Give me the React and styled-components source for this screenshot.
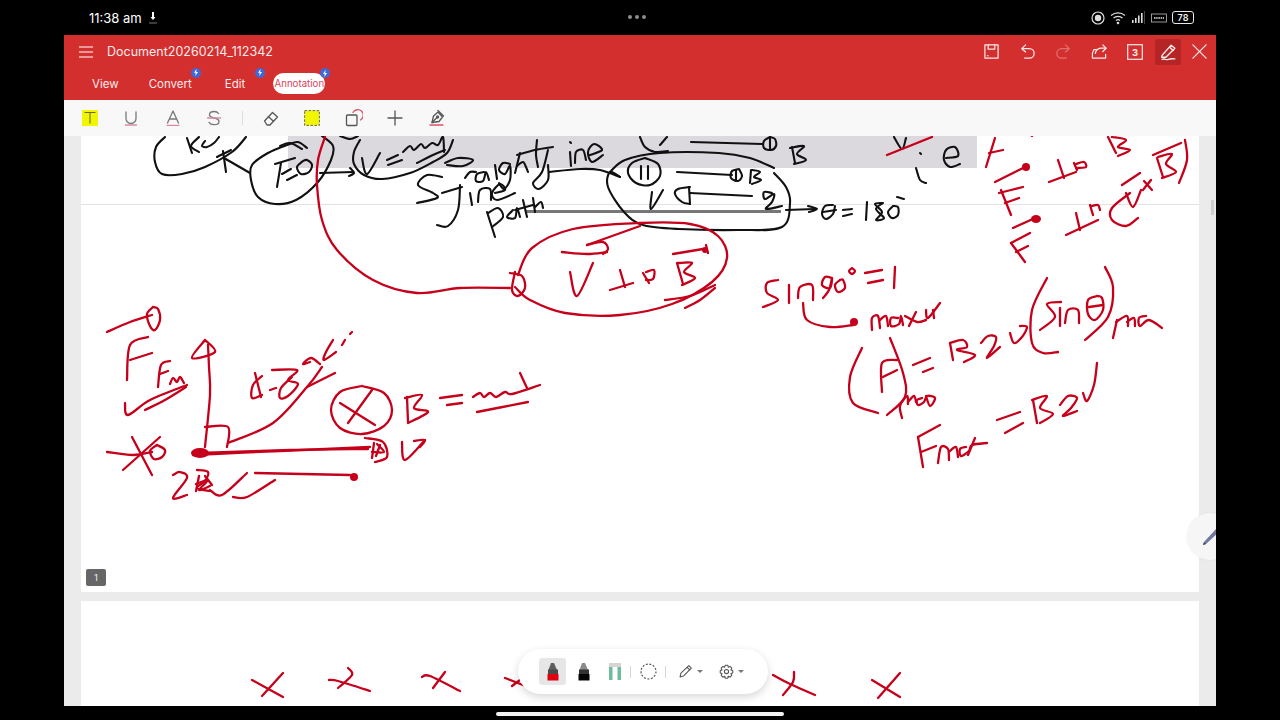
import React from "react";
import styled, { createGlobalStyle } from "styled-components";

const GlobalStyle = createGlobalStyle`
  html, body {
    margin: 0;
    padding: 0;
    background: #000;
    overflow: hidden;
  }
  * { box-sizing: border-box; }
`;

const Screen = styled.div`
  width: 1280px;
  height: 720px;
  background: #000;
  display: flex;
  flex-direction: column;
  align-items: center;
  font-family: Inter, "Liberation Sans", sans-serif;
`;

const Tablet = styled.div`
  width: 1152px;
  height: 706px;
  display: flex;
  flex-direction: column;
`;

const StatusBar = styled.div`
  height: 35px;
  display: flex;
  align-items: center;
  justify-content: space-between;
  padding: 0 22px 0 25px;
  color: #fff;
  position: relative;
`;

const StatusLeft = styled.div`
  display: flex;
  align-items: center;
  gap: 6px;
  font-size: 13px;
  font-weight: 400;
`;

const Dots = styled.div`
  display: flex;
  gap: 3px;
  position: absolute;
  left: 564px;
  top: 15px;
`;

const Dot = styled.span`
  width: 4px;
  height: 4px;
  border-radius: 50%;
  background: #8d8d8d;
`;

const StatusRight = styled.div`
  display: flex;
  align-items: center;
  gap: 5px;
`;

const Battery = styled.div`
  width: 22px;
  height: 13px;
  border: 1px solid #e8e8e8;
  border-radius: 3px;
  font-size: 9px;
  font-weight: 600;
  color: #eee;
  display: flex;
  align-items: center;
  justify-content: center;
`;

const Header = styled.header`
  height: 65px;
  background: #d32f2f;
  color: #fbeaea;
  display: flex;
  flex-direction: column;
`;

const TitleRow = styled.div`
  height: 33px;
  display: flex;
  align-items: center;
  padding: 0 4px 0 15px;
`;

const Title = styled.div`
  font-size: 12.5px;
  margin-left: 14px;
  flex: 1;
`;

const HeaderIcon = styled.div`
  width: 26px;
  height: 26px;
  margin-right: ${(p) => p.$mr ?? 10}px;
  display: flex;
  align-items: center;
  justify-content: center;
  border-radius: 2px;
  background: ${(p) => (p.$active ? "#b52525" : "transparent")};
  opacity: ${(p) => (p.$dim ? 0.35 : 1)};
`;

const TabRow = styled.div`
  height: 32px;
  display: flex;
  align-items: center;
  padding: 0 0 1px 28px;
`;

const Tab = styled.div`
  position: relative;
  font-size: 11.5px;
  margin-right: ${(p) => p.$mr}px;
`;

const ActiveTab = styled.div`
  position: relative;
  width: 52px;
  height: 21px;
  border-radius: 11px;
  background: #fff;
  color: #d9455a;
  font-size: 9.7px;
  display: flex;
  align-items: center;
  justify-content: center;
  white-space: nowrap;
`;

const Spark = styled.span`
  position: absolute;
  top: ${(p) => p.$top}px;
  right: ${(p) => p.$right}px;
  width: 10px;
  height: 10px;
  border-radius: 50%;
  background: #3f67d6;
  display: flex;
  align-items: center;
  justify-content: center;
`;

const Toolbar = styled.div`
  height: 36px;
  background: #f8f8f8;
  display: flex;
  align-items: center;
  padding-left: 5px;
`;

const ToolSlot = styled.div`
  width: 41.5px;
  height: 36px;
  display: flex;
  align-items: center;
  justify-content: center;
`;

const ToolDivider = styled.div`
  width: 1px;
  height: 14px;
  background: #dedede;
  margin: 0 7px;
`;

const Doc = styled.main`
  flex: 1;
  position: relative;
  overflow: hidden;
  background: #ebebeb;
  padding: 0 17px;
  display: flex;
  flex-direction: column;
`;

const PrevPage = styled.section`
  height: 69px;
  background: #fff;
  border-bottom: 1px solid #e2e2e2;
`;

const Highlight = styled.div`
  height: 32px;
  width: 689px;
  margin-left: 207px;
  background: #dbd9dd;
`;

const Page = styled.section`
  height: 387px;
  background: #fff;
  display: flex;
  flex-direction: column;
`;

const GreyRule = styled.div`
  height: 3px;
  width: 255px;
  margin: 5px 0 0 445px;
  background: #777;
`;

const PageBadge = styled.div`
  width: 20px;
  height: 17px;
  margin: auto 0 6px 5px;
  border-radius: 2px;
  background: #666;
  color: #eee;
  font-size: 9.5px;
  display: flex;
  align-items: center;
  justify-content: center;
`;

const NextPage = styled.section`
  flex: 1;
  margin-top: 9px;
  background: #fff;
`;

const InkLayer = styled.svg`
  position: absolute;
  inset: 0;
  width: 1152px;
  height: 570px;
  pointer-events: none;
  fill: none;
  stroke-linecap: round;
  stroke-linejoin: round;
  filter: blur(0.25px);
`;

const ScrollThumb = styled.div`
  position: absolute;
  right: 2px;
  top: 64px;
  width: 3px;
  height: 15px;
  background: #cfcfcf;
`;

const PencilFab = styled.div`
  position: absolute;
  left: 1123px;
  top: 377px;
  width: 47px;
  height: 47px;
  border-radius: 50%;
  background: #f6f6f7;
  box-shadow: 0 0 3px rgba(0, 0, 0, 0.06);
  display: flex;
  align-items: center;
  padding-left: 15px;
`;

const PenBar = styled.div`
  position: absolute;
  left: 454px;
  top: 513px;
  width: 250px;
  height: 45px;
  border-radius: 23px;
  background: #fff;
  box-shadow: 0 3px 8px rgba(0, 0, 0, 0.16);
  display: flex;
  align-items: center;
  padding-left: 19px;
`;

const PenSlot = styled.div`
  width: ${(p) => p.$w ?? 31}px;
  height: 27px;
  display: flex;
  align-items: center;
  justify-content: center;
`;

const SelectedPen = styled.div`
  width: 27px;
  height: 27px;
  border-radius: 3px;
  background: #e6e6e6;
  display: flex;
  align-items: center;
  justify-content: center;
`;

const PenDivider = styled.div`
  width: 1px;
  height: 12px;
  background: #d8d8d8;
`;

const Caret = styled.span`
  width: 0;
  height: 0;
  margin-left: 4px;
  border-left: 3px solid transparent;
  border-right: 3px solid transparent;
  border-top: 3px solid #777;
`;

const HomeZone = styled.div`
  height: 14px;
  display: flex;
  align-items: center;
  justify-content: center;
`;

const HomeIndicator = styled.div`
  width: 288px;
  height: 4px;
  margin-top: 1px;
  border-radius: 2px;
  background: #f2f2f2;
`;

// catmull-rom through the points so the ink looks hand drawn
const smooth = (p) => {
  let d = `M${p[0]} ${p[1]}`;
  const n = p.length / 2;
  const at = (i) => {
    const k = Math.max(0, Math.min(n - 1, i));
    return [p[k * 2], p[k * 2 + 1]];
  };
  for (let i = 0; i < n - 1; i++) {
    const [x0, y0] = at(i - 1);
    const [x1, y1] = at(i);
    const [x2, y2] = at(i + 1);
    const [x3, y3] = at(i + 2);
    const c1x = (x1 + (x2 - x0) / 6).toFixed(1);
    const c1y = (y1 + (y2 - y0) / 6).toFixed(1);
    const c2x = (x2 - (x3 - x1) / 6).toFixed(1);
    const c2y = (y2 - (y3 - y1) / 6).toFixed(1);
    d += `C${c1x} ${c1y} ${c2x} ${c2y} ${x2} ${y2}`;
  }
  return d;
};

const blackInk = [
  // Ke bubble on the left
  [165,137, 156,147, 155,162, 162,174, 182,174, 205,167, 232,152, 246,137],
  [187,138, 192,153], [199,137, 191,146, 199,152],
  [205,141, 202,146, 207,147, 214,143, 219,137],
  [224,158, 250,173], [217,157, 231,150], [223,151, 226,172],
  // F=0
  [307,148, 298,142, 287,145, 268,153, 252,165, 251,180, 258,197, 275,204, 296,200, 318,182, 331,160, 333,146, 322,136],
  [277,187, 281,163], [275,164, 295,158], [282,174, 291,169], [287,180, 297,175],
  [303,161, 297,167, 301,174, 309,172, 312,165, 307,160, 303,161],
  [280,146, 290,143, 302,149],
  // v = const
  [360,140, 354,152, 354,164, 364,175, 382,179, 410,173, 433,162, 447,153, 453,140],
  [320,173, 353,172], [350,168, 354,173, 349,176],
  [362,158, 367,174, 380,153], [387,160, 398,155], [388,165, 402,160],
  [403,152, 410,146, 414,150, 421,144, 425,148, 432,143, 438,145, 443,137, 444,152],
  [340,136, 350,139, 358,136],
  [417,163, 433,155, 445,150], [445,163, 458,158, 473,160, 463,166, 447,165],
  // Straight line path
  [442,177, 427,175, 418,185, 433,193, 437,198, 417,203],
  [437,225, 448,226, 458,210, 460,185], [442,193, 462,187],
  [465,178, 470,172, 476,172],
  [484,172, 477,174, 476,181, 483,181, 486,172, 489,180],
  [495,165, 497,179],
  [510,164, 503,163, 499,170, 505,174, 510,166, 510,180, 504,189, 499,183],
  [520,153, 515,173], [517,166, 523,162, 526,167, 528,172],
  [537,140, 536,155, 538,167], [517,155, 535,150, 553,147],
  [548,150, 542,172, 533,183, 539,189, 548,180, 548,165],
  [570,152, 571,166], [570,142, 571,143],
  [575,163, 576,152, 583,150, 586,160],
  [590,155, 602,150, 594,144, 588,152, 592,162, 603,155],
  [470,193, 472,205],
  [478,202, 480,190, 490,189, 491,200],
  [495,193, 505,190, 500,184, 492,193, 497,200, 515,193],
  [495,237, 487,212], [488,213, 498,208, 503,217, 492,227],
  [513,210, 507,217, 515,218, 517,208, 520,217],
  [523,200, 527,217], [515,210, 533,205],
  [533,198, 535,212], [535,207, 541,202, 543,208],
  // big oval 11 and velocity
  [549,172, 580,169, 600,170, 620,177],
  [620,177, 610,172, 608,187, 624,212, 643,225, 679,229, 738,230, 782,227, 790,203, 786,187, 774,173],
  [610,172, 625,160, 660,153, 719,153, 750,158, 774,168],
  [645,158, 632,163, 628,173, 636,183, 650,185, 660,176, 658,164, 645,158],
  [641,166, 641,179], [648,166, 648,179],
  [677,172, 732,175], [739,169, 732,171, 731,178, 738,181, 742,176, 739,169], [736,170, 736,181],
  [751,170, 750,183], [752,170, 760,172, 754,177, 761,180, 752,184],
  [652,192, 651,209, 663,190],
  [690,187, 678,189, 675,194, 682,202, 690,204], [689,187, 690,204],
  [690,193, 752,196],
  [772,193, 764,192, 765,199, 774,194, 772,202, 766,209, 782,206],
  [786,210, 815,209], [808,206, 817,209, 809,212],
  [833,205, 825,206, 822,214, 826,219, 833,214, 835,206], [823,212, 836,210],
  [843,210, 852,209], [843,216, 852,214],
  [867,202, 866,220],
  [883,203, 875,204, 882,212, 876,220, 884,218, 876,209, 883,203],
  [893,206, 888,212, 892,218, 898,215, 898,207, 893,206],
  [897,197, 904,199],
  // top of page
  [640,137, 645,147, 655,152, 668,151], [667,137, 660,145],
  [691,142, 762,144],
  [770,137, 764,141, 764,148, 771,150, 776,146, 775,139, 770,137], [770,137, 770,150],
  [792,147, 795,163], [790,148, 804,146, 797,154, 806,160, 794,164],
  [894,137, 902,149, 906,138],
  [916,168, 920,180, 926,183], [920,153, 921,154],
  [946,158, 958,156, 955,147, 946,150, 944,160, 950,167, 960,164],
];

const redInk = [
  // long red connector to the oval
  [325,137, 318,160, 317,185, 322,220, 337,250, 373,280, 417,293, 460,288, 510,288],
  [510,273, 522,276, 525,288, 518,296, 512,290, 515,272],
  // big oval
  [518,275, 532,248, 573,229, 640,223, 690,224, 718,236, 727,258, 712,282, 672,304, 620,315, 565,313, 530,300, 515,287],
  [570,272, 577,296, 593,263],
  [562,252, 587,254, 607,252], [587,245, 603,242, 608,249, 603,254], [587,245, 640,226],
  [610,290, 633,283], [620,270, 625,287],
  [643,273, 649,283], [646,272, 654,270, 653,279, 646,280],
  [677,263, 683,284], [678,263, 692,263, 684,272, 695,278, 682,285],
  [673,254, 703,249], [706,245, 708,253],
  [665,300, 690,296, 715,285], [685,308, 700,300, 715,288],
  [887,155, 932,137],
  // F perp lines, top right
  [995,138, 986,167], [989,153, 1003,150], [1031,135, 1032,136],
  [995,182, 1025,167],
  [1049,182, 1076,172], [1058,160, 1064,178],
  [1074,163, 1077,170], [1076,164, 1084,162, 1086,167, 1078,168],
  [1108,137, 1116,153], [1112,137, 1126,140, 1118,147, 1130,150, 1118,156],
  [1011,215, 1001,190], [999,193, 1023,187], [1005,203, 1019,198],
  [1013,228, 1035,218],
  [1025,262, 1011,243], [1011,243, 1030,233], [1016,252, 1028,246],
  [1066,235, 1098,220], [1076,213, 1080,230],
  [1090,205, 1093,215], [1092,206, 1098,205, 1100,210],
  [1130,193, 1112,208, 1112,220, 1126,226, 1138,218],
  [1122,185, 1140,173], [1126,193, 1133,207, 1141,190],
  [1143,190, 1151,180], [1144,181, 1152,190],
  [1153,155, 1181,143], [1157,158, 1163,177], [1158,157, 1172,154, 1166,164, 1176,172, 1162,178],
  [1185,140, 1187,160, 1179,183],
  // sin 90 = 1
  [778,280, 767,283, 767,293, 778,300, 763,307],
  [789,285, 789,303], [798,298, 800,287, 812,285, 813,300],
  [832,278, 825,277, 822,285, 830,288, 832,278, 829,290, 823,298],
  [840,280, 835,285, 838,292, 845,288, 843,280, 840,280],
  [852,268, 849,271, 852,274, 855,271, 852,268],
  [865,273, 882,270], [868,283, 883,280], [895,267, 894,288],
  [803,303, 807,320, 830,327, 853,325],
  [872,330, 872,318, 878,316, 880,328], [880,320, 886,316, 888,326],
  [898,318, 891,318, 891,326, 899,324, 901,316, 903,325],
  [905,316, 917,322, 926,320], [916,312, 909,326], [926,310, 928,318, 940,303], [933,310, 934,318],
  // (F)max
  [862,348, 850,377, 853,403, 878,413],
  [890,338, 903,373, 905,397, 887,415],
  [882,392, 882,363, 897,360], [883,377, 897,370],
  [902,418, 900,406, 907,396, 908,404], [908,402, 914,396, 916,402],
  [922,398, 917,400, 918,405, 924,402, 927,396, 935,398, 930,406, 926,396],
  [913,365, 930,358], [923,372, 933,368],
  [950,343, 953,360], [950,343, 963,340, 967,347, 957,350, 975,355, 964,362],
  [981,343, 988,336, 996,337, 994,346, 987,358, 1000,347],
  [1010,333, 1014,343, 1022,337, 1027,327, 1020,326],
  [1047,278, 1032,310, 1032,343, 1043,353, 1058,352],
  [1061,302, 1047,304, 1055,317, 1040,330],
  [1060,308, 1060,326], [1065,323, 1068,310, 1078,310, 1079,323],
  [1097,296, 1088,300, 1088,314, 1095,320, 1103,310, 1102,298, 1097,296], [1089,307, 1103,305],
  [1105,267, 1113,287, 1108,317, 1085,340],
  [1113,338, 1117,320], [1116,322, 1127,316, 1128,326], [1127,322, 1134,318, 1135,326],
  [1146,316, 1139,318, 1140,326, 1149,320, 1162,328],
  // Fmax = Bqv
  [923,467, 918,437], [918,437, 940,425], [921,452, 936,446],
  [938,463, 941,447, 948,449, 949,460], [950,451, 956,447, 958,457],
  [966,447, 960,449, 961,456, 969,451, 972,445, 987,443], [975,438, 968,455],
  [997,420, 1020,412], [1005,433, 1023,423],
  [1037,423, 1033,400], [1032,400, 1047,396, 1040,408, 1053,414, 1040,423],
  [1060,405, 1068,396, 1077,398, 1071,408, 1063,416, 1077,411],
  [1083,393, 1087,401, 1094,385, 1097,363],
  // bottom left diagram
  [107,332, 130,322, 152,315], [153,307, 147,314, 150,326, 155,330, 160,320, 158,309, 153,307],
  [127,380, 130,345, 148,337], [130,360, 152,353],
  [158,387, 161,365, 170,361], [160,374, 168,371],
  [170,384, 173,378, 177,382, 180,377, 184,383],
  [125,403, 128,415, 150,400, 187,385], [145,410, 165,400, 186,387],
  [205,447, 210,395, 209,367, 208,345],
  [205,340, 215,352, 192,358, 205,340],
  [205,427, 228,427, 227,447],
  [228,443, 273,423, 307,387, 322,367], [307,387, 335,373],
  [255,373, 261,397], [262,376, 253,385, 252,398, 262,395],
  [270,390, 276,388], [272,370, 297,370, 288,380, 298,384, 288,396, 280,398, 281,388, 292,377],
  [310,362, 303,364, 311,358, 320,364], [333,340, 326,352, 324,360, 336,352],
  [342,345, 345,340], [350,334, 352,332],
  [193,455, 280,451, 370,447], [200,453, 290,450, 368,449],
  [365,438, 383,442, 387,457, 375,462], [374,443, 372,458], [380,445, 376,456], [377,444, 384,452, 372,452],
  [402,442, 405,460, 425,440], [414,441, 425,440, 420,447],
  [107,452, 133,455, 152,452], [132,437, 152,475], [160,437, 123,470],
  [157,445, 150,451, 154,459, 162,457, 165,450, 157,445],
  [173,475, 180,472, 187,478, 173,498, 187,495],
  [197,470, 208,472, 205,481, 197,488, 210,491], [199,476, 196,491], [205,476, 212,485], [196,484, 208,480, 199,490, 210,486],
  [210,490, 222,495, 247,473], [233,497, 247,497, 275,480],
  [255,473, 350,475],
  [362,386, 340,392, 331,410, 340,428, 362,434, 384,426, 392,410, 384,393, 362,386],
  [340,403, 375,425], [372,390, 348,423],
  [407,397, 408,422], [405,398, 422,395, 414,408, 428,412, 408,423],
  [440,398, 462,395], [447,405, 462,403],
  [473,397, 480,393, 484,397, 490,393, 496,397, 505,392, 512,394, 540,385], [520,373, 527,388],
  [477,412, 528,402],
  // next page crosses
  [252,680, 283,697], [283,673, 262,696],
  [329,680, 338,681, 370,691], [348,668, 352,675, 338,688],
  [422,677, 430,676, 460,691], [445,672, 433,688],
  [505,678, 523,685], [520,680, 512,686],
  [773,675, 790,684, 815,695], [794,672, 793,682, 783,695],
  [872,680, 900,697], [900,673, 878,698],
];

// the dots at the end of the red arrows
const redDots = [
  [200, 453, 9, 5],
  [1026, 167, 4, 4],
  [1036, 219, 5, 4],
  [854, 322, 4, 4],
  [705, 250, 3, 3],
  [354, 477, 4, 4],
];

const Ink = () => (
  <InkLayer viewBox="64 136 1152 570">
    <g stroke="#111" strokeWidth="2.1">
      {blackInk.map((s, i) => (
        <path key={i} d={smooth(s)} />
      ))}
    </g>
    <g stroke="#c6001b" strokeWidth="2.3">
      {redInk.map((s, i) => (
        <path key={i} d={smooth(s)} />
      ))}
    </g>
    <g fill="#c6001b">
      {redDots.map(([cx, cy, rx, ry]) => (
        <ellipse key={cx} cx={cx} cy={cy} rx={rx} ry={ry} />
      ))}
    </g>
  </InkLayer>
);

const Ico = ({ size = 18, sw = 1.3, color = "currentColor", children }) => (
  <svg
    width={size}
    height={size}
    viewBox="0 0 18 18"
    fill="none"
    stroke={color}
    strokeWidth={sw}
    strokeLinecap="round"
    strokeLinejoin="round"
  >
    {children}
  </svg>
);

const Bolt = () => (
  <svg width="6" height="7" viewBox="0 0 6 7">
    <path d="M3.6 0 1 3.8h1.7L2.3 7 5 3H3.2z" fill="#fff" />
  </svg>
);

const tools = [
  <svg key="t" width="16" height="16" viewBox="0 0 16 16">
    <rect width="16" height="16" fill="#f2f500" />
    <path d="M2.5 2.5h11M8 2.5v11" stroke="#6d6d10" strokeWidth="1.1" fill="none" />
  </svg>,
  <Ico key="u" color="#777">
    <path d="M4 3v6.5a5 5 0 0 0 10 0V3" />
    <path d="M3.5 16h11" stroke="#d98aa0" />
  </Ico>,
  <Ico key="a" color="#777">
    <path d="M3.5 14 9 2l5.500 12M5.500 10h7" />
    <path d="M3 16.300h12" stroke="#d98aa0" />
  </Ico>,
  <Ico key="s" color="#777">
    <path d="M13.500 4.500C12.500 2.800 10.500 2.500 9 2.500c-2.500 0-4.500 1.200-4.500 3.200C4.500 10 14 8 14 12.500c0 2-2 3.200-5 3.200-2 0-4-.7-5-2.300" />
    <path d="M2.500 9h13" stroke="#d98aa0" />
  </Ico>,
];

const tools2 = [
  <Ico key="e" color="#555">
    <path d="M2.500 12 10.500 3.500l5 4.500-7.500 8H5z" />
    <path d="m6.500 7.800 5 4.500" />
  </Ico>,
  <svg key="r" width="16" height="16" viewBox="0 0 16 16">
    <rect x=".6" y=".6" width="14.800" height="14.800" fill="#f2f500" stroke="#666" strokeDasharray="2.500 1.500" />
  </svg>,
  <Ico key="sh" color="#555">
    <rect x="1.500" y="6" width="10.500" height="10.500" rx="1" />
    <path d="M8 3.500a5.500 5.500 0 1 1 7.500 7.500" stroke="#d9506a" />
  </Ico>,
  <Ico key="p" color="#555">
    <path d="M2 9h14M9 2v14" />
  </Ico>,
  <Ico key="pn" color="#555">
    <path d="M4 13.500 5.500 7 10 3l4.500 5-3.500 4.500z" />
    <path d="M4 13.500 9 8.500" />
    <circle cx="9.600" cy="8" r="1" />
    <path d="m10 1.500 5.500 5.500" />
    <path d="M2 16h13" stroke="#d9506a" />
  </Ico>,
];

const Marker = ({ body, tip, cap }) => (
  <svg width="14" height="18" viewBox="0 0 14 18">
    <path d="M5 0h3l3 7H2.500z" fill={tip} />
    <rect x="2" y="6.500" width="10" height="5" fill={cap} />
    <rect x="1.500" y="11" width="11" height="6.500" fill={body} />
  </svg>
);

export default function App() {
  return (
    <Screen>
      <GlobalStyle />
      <Tablet>
        <StatusBar>
          <StatusLeft>
            <span>11:38 am</span>
            <svg width="10" height="13" viewBox="0 0 10 13">
              <path d="M5 1v7" stroke="#fff" strokeWidth="2" />
              <path d="M2.500 6 5 9l2.500-3z" fill="#fff" />
              <path d="M1 12h8" stroke="#777" strokeWidth="1" />
            </svg>
          </StatusLeft>
          <Dots>
            <Dot />
            <Dot />
            <Dot />
          </Dots>
          <StatusRight>
            <svg width="14" height="14" viewBox="0 0 14 14" fill="none">
              <circle cx="7" cy="7" r="6" stroke="#ddd" strokeWidth="1.200" />
              <circle cx="7" cy="7" r="3.200" fill="#ddd" />
            </svg>
            <svg width="16" height="14" viewBox="0 0 16 14" fill="none" stroke="#ddd" strokeWidth="1.100">
              <path d="M1 4.500c4-3.500 10-3.500 14 0M3.500 7c2.500-2.200 6.500-2.200 9 0M6 9.500c1.200-1 2.800-1 4 0" />
              <circle cx="8" cy="12" r=".8" fill="#ddd" />
            </svg>
            <svg width="15" height="13" viewBox="0 0 15 13" fill="#ddd">
              <rect x="1" y="9" width="1.600" height="3" />
              <rect x="4" y="7" width="1.600" height="5" />
              <rect x="7" y="4.500" width="1.600" height="7.500" />
              <rect x="10" y="2" width="1.600" height="10" />
              <rect x="13" y="0" width=".7" height="13" fill="#666" />
            </svg>
            <svg width="16" height="10" viewBox="0 0 16 10" fill="none">
              <rect x=".5" y="1" width="15" height="8" stroke="#bbb" strokeWidth=".8" />
              <path d="M3 5h10" stroke="#aaa" strokeWidth="2" strokeDasharray="1.500 .7" />
            </svg>
            <Battery>78</Battery>
          </StatusRight>
        </StatusBar>

        <Header>
          <TitleRow>
            <svg width="14" height="12" viewBox="0 0 14 12" stroke="#fff" strokeWidth="1.200">
              <path d="M0 1h14M0 6h14M0 11h14" />
            </svg>
            <Title>Document20260214_112342</Title>
            <HeaderIcon>
              <Ico size={17}>
                <path d="M2 2h14v14H2z" />
                <path d="M5.500 2v4.500h7V2M4.500 13.500h1" />
              </Ico>
            </HeaderIcon>
            <HeaderIcon>
              <Ico size={17}>
                <path d="M7 2 3 6l4 3.500" />
                <path d="M3.500 6H11a4.500 4.500 0 0 1 0 10H6" />
              </Ico>
            </HeaderIcon>
            <HeaderIcon $dim>
              <Ico size={17}>
                <path d="m11 2 4 4-4 3.500" />
                <path d="M14.500 6H7a4.500 4.500 0 0 0 0 10h5" />
              </Ico>
            </HeaderIcon>
            <HeaderIcon>
              <Ico size={17}>
                <path d="M6 7H3L1.500 11v5h14v-4" />
                <path d="M4.500 11c.5-3 3-5.500 7-5.500h4" />
                <path d="m12.500 2 3.500 3.500L12.500 9" />
              </Ico>
            </HeaderIcon>
            <HeaderIcon $mr={7}>
              <svg width="16" height="16" viewBox="0 0 16 16" fill="none">
                <rect x=".7" y=".7" width="14.600" height="14.600" stroke="currentColor" strokeWidth="1.200" />
                <text x="8" y="11.500" fontSize="9.500" fontWeight="700" textAnchor="middle" fill="currentColor" fontFamily="Inter, sans-serif">
                  3
                </text>
              </svg>
            </HeaderIcon>
            <HeaderIcon $active $mr={5}>
              <Ico size={19}>
                <path d="M3 12.500 11.500 3l3.500 3-8.500 8.500H2.500z" />
                <path d="m10 5 3.500 3M3 16.500c3-1.500 3 1 6 0s3-.5 6-.5" />
              </Ico>
            </HeaderIcon>
            <HeaderIcon $mr={0}>
              <Ico size={17}>
                <path d="m2 2 14 14M16 2 2 16" />
              </Ico>
            </HeaderIcon>
          </TitleRow>
          <TabRow>
            <Tab $mr={30}>View</Tab>
            <Tab $mr={33}>
              Convert
              <Spark $top={-9} $right={-9}>
                <Bolt />
              </Spark>
            </Tab>
            <Tab $mr={28}>
              Edit
              <Spark $top={-9} $right={-20}>
                <Bolt />
              </Spark>
            </Tab>
            <ActiveTab>
              Annotation
              <Spark $top={-5} $right={-5}>
                <Bolt />
              </Spark>
            </ActiveTab>
          </TabRow>
        </Header>

        <Toolbar>
          {tools.map((icon, i) => (
            <ToolSlot key={i}>{icon}</ToolSlot>
          ))}
          <ToolDivider />
          {tools2.map((icon, i) => (
            <ToolSlot key={i}>{icon}</ToolSlot>
          ))}
        </Toolbar>

        <Doc>
          <PrevPage>
            <Highlight />
          </PrevPage>
          <Page>
            <GreyRule />
            <PageBadge>1</PageBadge>
          </Page>
          <NextPage />
          <Ink />
          <ScrollThumb />
          <PencilFab>
            <svg width="16" height="18" viewBox="0 0 16 18">
              <path d="M1 17 2 14 14 1l3 3L4 16z" fill="#7478a0" />
              <path d="M1 17 2 14l2 2z" fill="#44465f" />
            </svg>
          </PencilFab>
          <PenBar>
            <PenSlot>
              <SelectedPen>
                <Marker tip="#5e5e5e" cap="#4a4a4a" body="#e0000f" />
              </SelectedPen>
            </PenSlot>
            <PenSlot>
              <Marker tip="#8a8a8a" cap="#333" body="#050505" />
            </PenSlot>
            <PenSlot>
              <svg width="14" height="17" viewBox="0 0 14 17">
                <rect x="1" y="0" width="12" height="4" fill="#d5d5d5" />
                <rect x="1" y="4" width="3.500" height="13" fill="#6fbb9e" />
                <rect x="9.500" y="4" width="3.500" height="13" fill="#6fbb9e" />
              </svg>
            </PenSlot>
            <PenDivider />
            <PenSlot $w={34}>
              <svg width="17" height="17" viewBox="0 0 17 17" fill="none">
                <circle cx="8.500" cy="8.500" r="7.500" stroke="#555" strokeWidth="1.200" strokeDasharray="2 1.600" />
              </svg>
            </PenSlot>
            <PenDivider />
            <PenSlot $w={48}>
              <Ico size={15} color="#555">
                <path d="M2.500 15.500 3.500 11 13 2l3 3-9.500 9.500z" />
                <path d="m11 4 3 3" />
              </Ico>
              <Caret />
            </PenSlot>
            <PenSlot $w={34}>
              <Ico size={15} color="#555">
                <circle cx="9" cy="9" r="2.500" />
                <path d="M7.500 1.500h3l.6 2.300 2.100-.9 2.100 2.100-1 2.100 2.200.7v3l-2.200.7 1 2.100-2.100 2.100-2.100-1-.6 2.300h-3l-.7-2.300-2.100 1-2.100-2.100 1-2.100-2.100-.7v-3l2.100-.7-1-2.100 2.100-2.100 2.100.9z" />
              </Ico>
              <Caret />
            </PenSlot>
          </PenBar>
        </Doc>
      </Tablet>
      <HomeZone>
        <HomeIndicator />
      </HomeZone>
    </Screen>
  );
}
